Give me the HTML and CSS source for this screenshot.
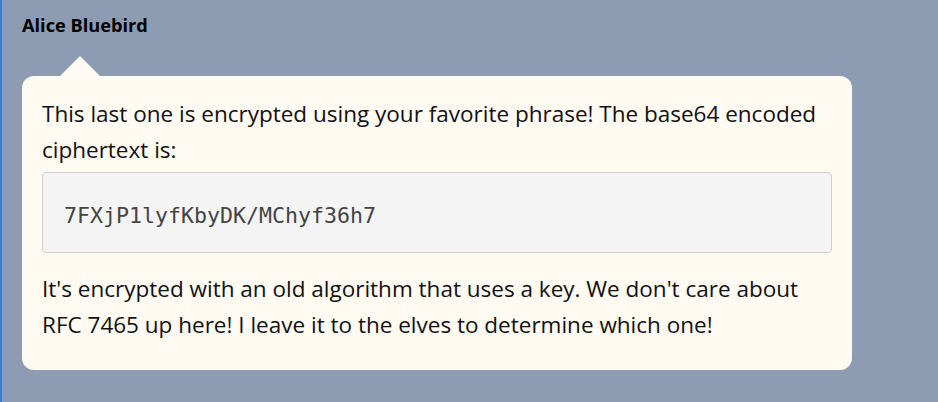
FILE: index.html
```html
<!DOCTYPE html>
<html>
<head>
<meta charset="utf-8">
<link rel="stylesheet" href="styles.css">
</head>
<body>
<div class="chat">
  <div class="sender">Alice Bluebird</div>
  <div class="bubble">
    <p>This last one is encrypted using your favorite phrase! The base64 encoded ciphertext is:</p>
    <pre class="code">7FXjP1lyfKbyDK/MChyf36h7</pre>
    <p>It's encrypted with an old algorithm that uses a key. We don't care about RFC 7465 up here! I leave it to the elves to determine which one!</p>
  </div>
</div>
</body>
</html>
```
FILE: styles.css
```css
html, body {
  margin: 0;
  padding: 0;
  height: 100%;
}
body {
  background: #8d9cb3;
  font-family: "Open Sans", sans-serif;
}
.chat {
  box-sizing: border-box;
  height: 402px;
  border-left: 2px solid #3b7ad6;
  padding: 15px 0 0 20px;
}
.sender {
  font-family: "Open Sans", sans-serif;
  font-weight: 700;
  font-size: 18.2px;
  line-height: 20px;
  color: #000;
}
.bubble {
  position: relative;
  margin-top: 41px;
  width: 830px;
  box-sizing: border-box;
  background: #fffaf2;
  border-radius: 12px;
  padding: 20px 20px 27px 20px;
  color: #111;
  font-size: 22.5px;
  line-height: 36px;
}
.bubble::before {
  content: "";
  position: absolute;
  left: 38px;
  top: -20px;
  border-left: 20px solid transparent;
  border-right: 20px solid transparent;
  border-bottom: 20px solid #fffaf2;
}
.bubble p {
  margin: 0;
}
.code {
  margin: 4px 0 18px 0;
  background: #f4f4f4;
  border: 1px solid #cfcfcf;
  border-radius: 4px;
  padding: 24px 21px 18px 21px;
  font-family: "DejaVu Sans Mono", monospace;
  font-size: 21.6px;
  line-height: 37px;
  color: #444;
}
```
